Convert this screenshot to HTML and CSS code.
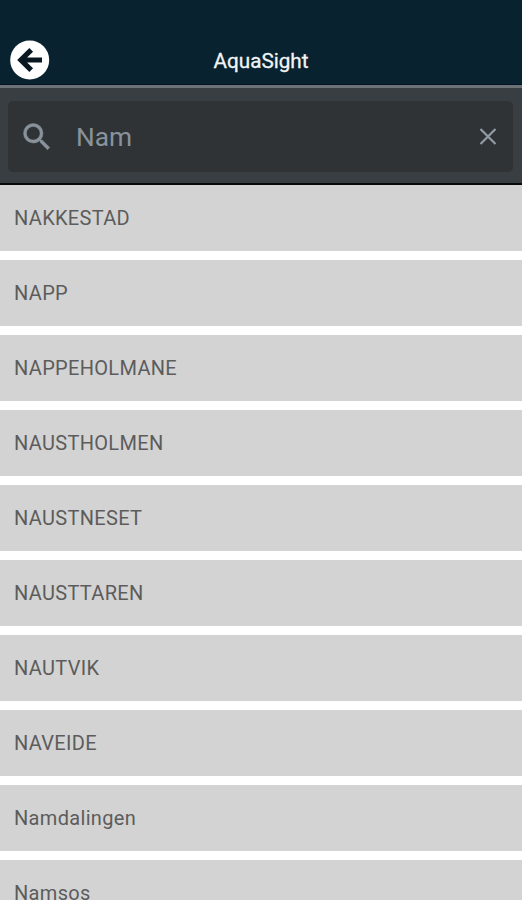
FILE: index.html
```html
<!DOCTYPE html>
<html lang="en">
<head>
    <meta charset="UTF-8">
    <meta name="viewport" content="width=device-width, initial-scale=1.0">
    <title>AquaSight</title>
    <link rel="stylesheet" href="styles.css">
</head>
<body>
    <!-- Header with back button -->
    <header class="header">
        <button class="back-button" aria-label="Back">
            <svg width="40" height="40" viewBox="0 0 40 40">
                <circle cx="19.7" cy="20" r="19.5" fill="#fff"/>
                <path d="M32 20H12M21.2 9.8L10.9 20L21.2 30.2" fill="none" stroke="#081722" stroke-width="5.2"/>
            </svg>
        </button>
        <h1 class="title">AquaSight</h1>
    </header>

    <!-- Search bar -->
    <div class="search-section">
        <div class="search-box">
            <svg class="search-icon" width="36" height="36" viewBox="0 0 24 24" fill="#89919a" stroke="#89919a" stroke-width="0.3">
                <path d="M15.5 14h-.79l-.28-.27A6.47 6.47 0 0 0 16 9.5 6.5 6.5 0 1 0 9.5 16c1.61 0 3.09-.59 4.23-1.57l.27.28v.79l5 4.99L20.49 19l-4.99-5zm-6 0C7.01 14 5 11.99 5 9.5S7.01 5 9.5 5 14 7.01 14 9.5 11.99 14 9.5 14z"/>
            </svg>
            <input class="search-input" type="text" value="Nam" aria-label="Search">
            <svg class="clear-icon" width="18" height="18" viewBox="0 0 18 18" fill="none" stroke="#939aa5" stroke-width="2.2">
                <path d="M1.5 1L16.5 16M16.5 1L1.5 16"/>
            </svg>
        </div>
    </div>

    <!-- Search results -->
    <ul class="results">
        <li class="result">NAKKESTAD</li>
        <li class="result">NAPP</li>
        <li class="result">NAPPEHOLMANE</li>
        <li class="result">NAUSTHOLMEN</li>
        <li class="result">NAUSTNESET</li>
        <li class="result">NAUSTTAREN</li>
        <li class="result">NAUTVIK</li>
        <li class="result">NAVEIDE</li>
        <li class="result">Namdalingen</li>
        <li class="result">Namsos</li>
    </ul>
</body>
</html>
```
FILE: styles.css
```css
* {
    box-sizing: border-box;
}
body {
    font-family: Roboto, sans-serif;
    background-color: #fff;
    margin: 0;
    height: 900px;
    overflow: hidden;
}
.header {
    display: grid;
    grid-template-columns: 40px 1fr 40px;
    align-items: center;
    height: 85px;
    padding: 36px 10px 0;
    background-color: #08222f;
    border-bottom: 1px solid #041225;
}
.back-button {
    width: 40px;
    height: 40px;
    padding: 0;
    border: none;
    background: none;
    cursor: pointer;
}
.back-button svg {
    display: block;
}
.title {
    margin: 1px 0 0;
    color: #f2f4f5;
    font-size: 20.7px;
    font-weight: 400;
    line-height: 24px;
    text-align: center;
    -webkit-text-stroke: 0.3px #f2f4f5;
}
.search-section {
    height: 100px;
    padding: 13px 9px 11px 8px;
    background-color: #393e42;
    border-top: 3px solid #6b7175;
    border-bottom: 2px solid #080909;
}
.search-box {
    display: flex;
    align-items: center;
    height: 71px;
    padding: 0 16px 0 11px;
    border-radius: 5px;
    background-color: #2f3336;
}
.search-input {
    flex: 1;
    min-width: 0;
    margin-left: 21px;
    padding: 0;
    border: none;
    outline: none;
    background: none;
    color: #89929b;
    font-family: inherit;
    font-size: 26.3px;
}
.results {
    list-style: none;
    margin: 0;
    padding: 0;
}
.result {
    height: 66px;
    margin-bottom: 9px;
    padding-left: 14px;
    background-color: #d3d3d3;
    color: #5c5c5c;
    font-size: 20px;
    line-height: 66px;
    letter-spacing: 0.32px;
}
```
